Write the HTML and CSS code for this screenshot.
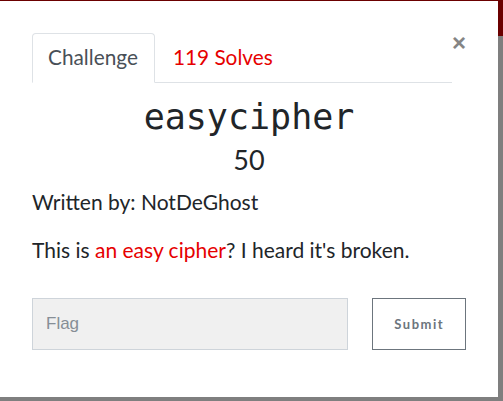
FILE: index.html
```html
<!DOCTYPE html>
<html>
<head>
<meta charset="utf-8">
<link rel="stylesheet" href="styles.css">
</head>
<body>
<div class="modal">
  <div class="header">
    <ul class="tabs">
      <li><a class="tab active">Challenge</a></li>
      <li><a class="tab solves">119 Solves</a></li>
    </ul>
    <button class="close">&times;</button>
  </div>
  <h3 class="title">easycipher</h3>
  <h4 class="value">50</h4>
  <p class="author">Written by: NotDeGhost</p>
  <p class="desc">This is <span class="link">an easy cipher</span>? I heard it's broken.</p>
  <div class="submit-row">
    <input class="flag" type="text" placeholder="Flag">
    <button class="submit">Submit</button>
  </div>
</div>
</body>
</html>
```
FILE: styles.css
```css
html, body {
  margin: 0;
  height: 100%;
}
body {
  background: linear-gradient(#6b0000 0, #6b0000 36px, #7f7f7f 36px);
  font-family: Lato, "Noto Sans", sans-serif;
  color: #212529;
  overflow: hidden;
}
.modal {
  margin-top: 1px;
  width: 498px;
  height: 396px;
  background: #fff;
  box-sizing: border-box;
  padding: 32px 32px 0 32px;
}
.header {
  display: flex;
  justify-content: space-between;
  align-items: flex-start;
}
.tabs {
  list-style: none;
  margin: 0;
  padding: 0;
  display: flex;
  width: 420px;
  border-bottom: 1px solid #dee2e6;
}
.tab {
  display: block;
  margin-bottom: -1px;
  border: 1px solid transparent;
  border-radius: 4px 4px 0 0;
  padding: 7px 16px 10px 15px;
  font-size: 20.8px;
  line-height: 31px;
  color: #495057;
}
.tab.active {
  border-color: #dee2e6 #dee2e6 #fff;
  background: #fff;
}
.tab.solves {
  color: #e60000;
  padding-left: 17px;
}
.close {
  background: none;
  border: 0;
  padding: 0;
  margin: -2px 0 0 0;
  font-family: "Liberation Sans", sans-serif;
  font-weight: 700;
  font-size: 24px;
  line-height: 24px;
  color: #858585;
}
.title {
  margin: 13px 0 0;
  text-align: center;
  font-family: "DejaVu Sans Mono", monospace;
  font-weight: 400;
  font-size: 35px;
  line-height: 42px;
}
.value {
  margin: 6px 0 0;
  text-align: center;
  font-weight: 400;
  font-size: 27px;
  line-height: 32px;
}
.author {
  margin: 10px 0 0;
  font-size: 21px;
  line-height: 31.5px;
}
.desc {
  margin: 16px 0 0;
  font-size: 21px;
  line-height: 31.5px;
}
.link {
  color: #e60000;
}
.submit-row {
  display: flex;
  gap: 24px;
  margin-top: 33px;
}
.flag {
  width: 318px;
  height: 52px;
  box-sizing: border-box;
  margin: 0;
  border: 1px solid #ced4da;
  background: #f0f0f0;
  padding: 0 13px;
  font-family: "Liberation Sans", Arial, sans-serif;
  font-size: 17px;
  color: #495057;
}
.flag::placeholder {
  color: #868e96;
}
.submit {
  width: 94px;
  height: 52px;
  box-sizing: border-box;
  margin: 0;
  border: 1px solid #6c757d;
  background: #fff;
  font-family: Lato, sans-serif;
  font-weight: 700;
  font-size: 13px;
  letter-spacing: 1.5px;
  color: #6c757d;
}
```
